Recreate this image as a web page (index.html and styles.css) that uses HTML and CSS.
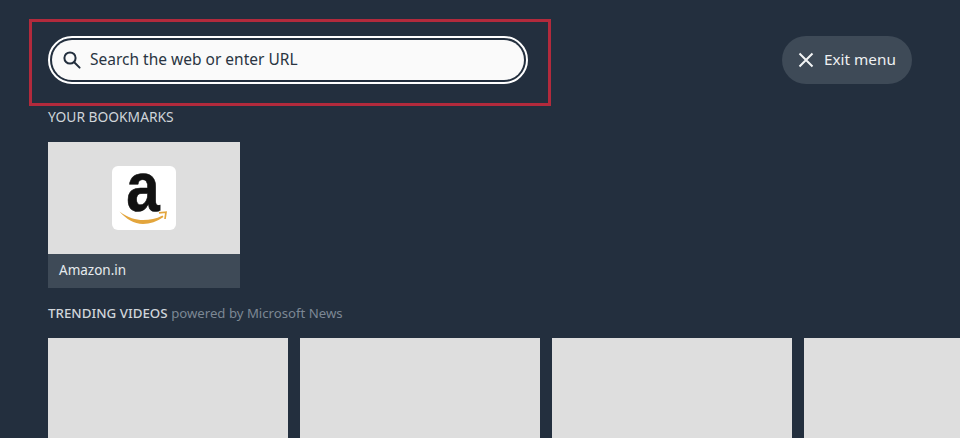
FILE: index.html
```html
<!DOCTYPE html>
<html lang="en">
<head>
<meta charset="utf-8">
<title>Browser menu</title>
<link rel="stylesheet" href="styles.css">
</head>
<body>
<div class="highlight"></div>
<main class="page">
  <header class="top">
    <div class="search">
      <div class="search-field">
        <svg class="search-icon" width="20" height="20" viewBox="0 0 20 20" fill="none" stroke="#232f3e" stroke-width="2" stroke-linecap="round"><circle cx="8" cy="8" r="5.6"/><path d="M12.2 12.2 17.6 17.6"/></svg>
        <span class="search-text">Search the web or enter URL</span>
      </div>
    </div>
    <button class="exit">
      <svg width="16" height="16" viewBox="0 0 16 16" fill="none" stroke="#f2f4f5" stroke-width="2"><path d="M1.5 1.5 14.5 14.5M14.5 1.5 1.5 14.5"/></svg>
      <span class="exit-text">Exit menu</span>
    </button>
  </header>
  <h2 class="section-title bookmarks-title">YOUR BOOKMARKS</h2>
  <div class="bookmark">
    <div class="bookmark-thumb">
      <div class="logo">
        <span class="logo-a">a</span>
        <svg class="logo-smile" width="50" height="16" viewBox="0 0 50 16"><path d="M1.5 2.5C10 9 18 11 25 11 32 11 38 10 44.5 6.5L45.5 8C39 12.5 32 15 25 15 16 15 8 10 1.5 2.5Z" fill="#e3a53c"/><path d="M41 3.8 48 3.2 47 10" fill="none" stroke="#e3a53c" stroke-width="1.7"/></svg>
      </div>
    </div>
    <div class="bookmark-label">Amazon.in</div>
  </div>
  <h2 class="section-title trending-title">TRENDING VIDEOS <span class="powered">powered by Microsoft News</span></h2>
  <div class="videos">
    <div class="video"></div>
    <div class="video"></div>
    <div class="video"></div>
    <div class="video"></div>
  </div>
</main>
</body>
</html>
```
FILE: styles.css
```css
* { box-sizing: border-box; }
html, body { margin: 0; height: 100%; }
body {
  background: #232f3e;
  font-family: "Noto Sans", "Liberation Sans", sans-serif;
  overflow: hidden;
  position: relative;
}
.highlight {
  position: absolute;
  left: 29px;
  top: 19px;
  width: 522px;
  height: 87px;
  border: 3px solid #b22a3c;
}
.page { padding: 36px 0 0 48px; }
.top {
  display: flex;
  justify-content: space-between;
  align-items: center;
  width: 864px;
}
.search {
  width: 480px;
  height: 48px;
  border: 2px solid #fff;
  border-radius: 24px;
  padding: 2px;
}
.search-field {
  height: 100%;
  background: #fafafa;
  border-radius: 20px;
  display: flex;
  align-items: center;
  gap: 8px;
  padding-left: 10px;
  color: #2a3542;
  font-size: 15.5px;
}
.search-text { line-height: 20px; margin-top: -2px; }
.exit {
  width: 130px;
  height: 48px;
  border: 0;
  border-radius: 24px;
  background: #3e4a57;
  color: #eef0f2;
  font: inherit;
  font-size: 15.3px;
  display: flex;
  align-items: center;
  gap: 10px;
  padding: 0 0 0 16px;
}
.exit-text { line-height: 20px; margin-top: -2px; }
.section-title {
  margin: 0;
  font-size: 13.8px;
  font-weight: 400;
  line-height: 18px;
  color: #d0d5da;
}
.bookmarks-title { margin-top: 24px; }
.bookmark { width: 192px; margin-top: 16px; }
.bookmark-thumb {
  height: 112px;
  background: #dedede;
  display: flex;
  align-items: center;
  justify-content: center;
}
.logo {
  width: 64px;
  height: 64px;
  background: #fff;
  border-radius: 6px;
  position: relative;
}
.logo-a {
  position: absolute;
  left: -2px;
  right: 0;
  top: -9px;
  text-align: center;
  font-family: "Liberation Sans", sans-serif;
  font-weight: 700;
  font-size: 70px;
  line-height: 60px;
  color: #111;
  transform: scaleX(0.86);
  -webkit-text-stroke: 0.6px #111;
}
.logo-smile { position: absolute; left: 6px; top: 43px; }
.bookmark-label {
  height: 34px;
  background: #3e4a57;
  color: #e6eaee;
  font-size: 13.5px;
  line-height: 33px;
  padding-left: 11px;
}
.trending-title { margin-top: 16px; font-weight: 500; font-size: 13.35px; }
.powered { color: #7c8794; font-weight: 400; font-size: 13.2px; }
.videos { display: flex; gap: 12px; margin-top: 16px; }
.video {
  flex: none;
  width: 240px;
  height: 135px;
  background: #dedede;
}
```
